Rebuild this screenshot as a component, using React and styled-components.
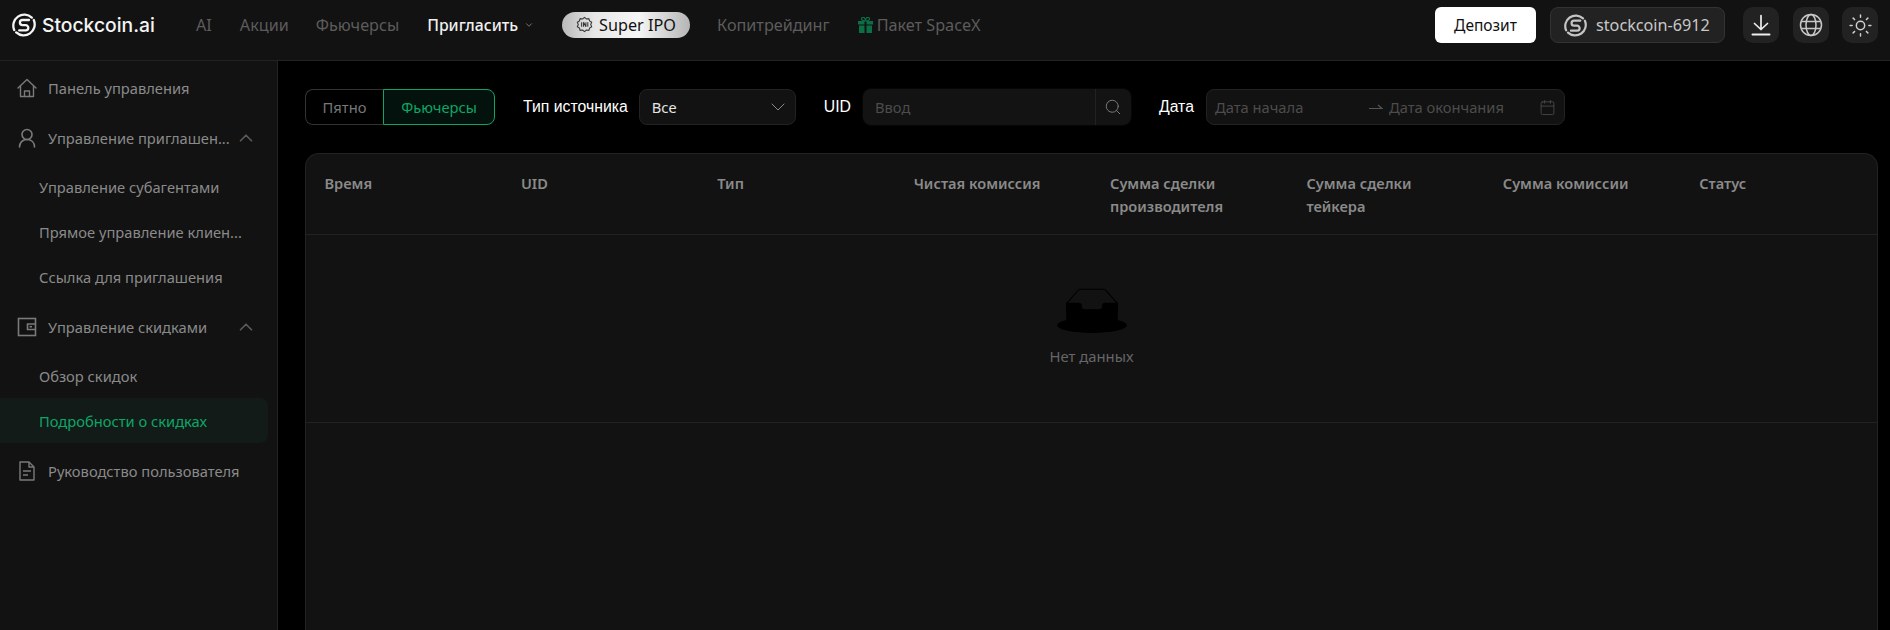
import React from 'react';
import styled, { createGlobalStyle } from 'styled-components';
import { ChevronDown, ChevronUp, Search, Sun, Calendar } from 'lucide-react';

const GlobalStyle = createGlobalStyle`
  html, body {
    margin: 0;
    height: 100%;
    background: #000;
    overflow: hidden;
  }
  #root { height: 100%; }
  * { box-sizing: border-box; }
`;

const FONT = `"Noto Sans", "Open Sans", sans-serif`;

const Page = styled.div`
  width: 1890px;
  height: 630px;
  display: flex;
  flex-direction: column;
  font-family: ${FONT};
  overflow: hidden;
`;

// Header
const Header = styled.header`
  height: 61px;
  flex: none;
  display: flex;
  align-items: flex-start;
  padding: 7px 12px 0 12px;
  background: #121212;
  border-bottom: 1px solid #222;
`;

const Brand = styled.div`
  display: flex;
  align-items: center;
  gap: 6px;
  width: 184px;
  height: 36px;
  color: #f4f4f4;
  font-family: "Inter", sans-serif;
  font-size: 19.3px;
  font-weight: 500;
`;

const Nav = styled.nav`
  display: flex;
  align-items: center;
  height: 36px;
  flex: 1;
`;

const NavItem = styled.a`
  display: flex;
  align-items: center;
  gap: ${p => p.$gap || 0}px;
  margin-right: ${p => p.$mr}px;
  font-size: ${p => (p.$active ? 15.8 : 16.2)}px;
  line-height: 34px;
  height: 34px;
  color: ${p => (p.$active ? '#f0f0f0' : '#5c5c5c')};
  font-weight: ${p => (p.$active ? 500 : 400)};
`;

const IpoPill = styled.div`
  display: flex;
  align-items: center;
  gap: 6px;
  width: 128px;
  height: 26px;
  margin-right: 27px;
  margin-top: -1px;
  padding-left: 14px;
  border-radius: 13px;
  font-size: 16.2px;
  color: #111;
  background: linear-gradient(90deg, #b9b9b9 0%, #e6e6e6 25%, #f6f6f6 60%, #b5b5b5 100%);
`;

const HeaderRight = styled.div`
  display: flex;
  align-items: center;
  height: 36px;
`;

const DepositButton = styled.button`
  width: 101px;
  height: 36px;
  margin-right: 14px;
  border: none;
  border-radius: 6px;
  background: #fff;
  color: #111;
  font-family: ${FONT};
  font-size: 15.5px;
  padding: 0;
`;

const Account = styled.div`
  display: flex;
  align-items: center;
  gap: 9px;
  width: 175px;
  height: 36px;
  margin-right: 18px;
  padding-left: 13px;
  background: #222;
  border: 1px solid #333;
  border-radius: 8px;
  color: #c8c8c8;
  font-size: 16.2px;
`;

const IconButton = styled.div`
  width: 36px;
  height: 36px;
  margin-left: ${p => p.$ml || 0}px;
  display: flex;
  align-items: center;
  justify-content: center;
  background: #222;
  border-radius: 10px;
  color: #d0d0d0;
`;

// Body
const Body = styled.div`
  flex: 1;
  display: flex;
  min-height: 0;
`;

const Sidebar = styled.aside`
  width: 278px;
  flex: none;
  padding: 4px 9px 0 0;
  background: #121212;
  border-right: 1px solid #222;
`;

const MenuItem = styled.div`
  display: flex;
  align-items: center;
  height: 45px;
  margin-bottom: ${p => p.$mb ?? 5}px;
  padding-left: ${p => (p.$sub ? 39 : 17)}px;
  border-radius: 0 8px 8px 0;
  font-size: 14.7px;
  color: ${p => (p.$selected ? '#0da667' : '#8a8a8a')};
  background: ${p => (p.$selected ? '#121b18' : 'transparent')};
`;

const MenuIcon = styled.span`
  width: 31px;
  flex: none;
  display: flex;
  color: #7a7a7a;
`;

const MenuLabel = styled.span`
  flex: 1;
  white-space: nowrap;
`;

const MenuArrow = styled.span`
  width: 33px;
  flex: none;
  display: flex;
  color: #5a5a5a;
`;

const Main = styled.main`
  flex: 1;
  min-width: 0;
  padding: 28px 12px 0 27px;
  background: #000;
  display: flex;
  flex-direction: column;
`;

const Filters = styled.div`
  display: flex;
  align-items: center;
  height: 36px;
  margin-bottom: 28px;
`;

const Toggle = styled.div`
  display: flex;
  width: 190px;
  height: 36px;
  margin-right: 28px;
`;

const ToggleOption = styled.div`
  display: flex;
  align-items: center;
  justify-content: center;
  flex: ${p => (p.$on ? '0 0 112px' : '1')};
  font-size: 14.7px;
  color: ${p => (p.$on ? '#0da667' : '#777')};
  background: ${p => (p.$on ? '#03120c' : 'transparent')};
  border: 1px solid ${p => (p.$on ? '#0da667' : '#333')};
  border-right-width: ${p => (p.$on ? 1 : 0)}px;
  border-radius: ${p => (p.$on ? '0 8px 8px 0' : '8px 0 0 8px')};
`;

const FilterLabel = styled.label`
  margin-right: ${p => p.$mr}px;
  font-family: "Liberation Sans", Arial, sans-serif;
  font-size: 15.8px;
  color: #fff;
`;

const Select = styled.div`
  display: flex;
  align-items: center;
  justify-content: space-between;
  width: 157px;
  height: 36px;
  margin-right: 28px;
  padding: 0 5px 0 12px;
  background: #121212;
  border: 1px solid #222;
  border-radius: 8px;
  font-size: 14.7px;
  color: #e4e4e4;
`;

const SearchGroup = styled.div`
  display: flex;
  width: 270px;
  height: 38px;
  margin-right: 27px;
  border: 1px solid #060606;
  border-radius: 9px;
  background: #131313;
`;

const SearchText = styled.div`
  flex: 1;
  display: flex;
  align-items: center;
  padding-left: 12px;
  font-size: 14.7px;
  color: #4c4c4c;
`;

const SearchAddon = styled.div`
  width: 36px;
  display: flex;
  align-items: center;
  justify-content: center;
  border-left: 1px solid #222;
  color: #7a7a7a;
`;

const DatePicker = styled.div`
  display: flex;
  align-items: center;
  width: 359px;
  height: 36px;
  padding: 0 8px;
  background: #121212;
  border: 1px solid #222;
  border-radius: 8px;
  font-size: 14.7px;
  color: #4c4c4c;
`;

const DateStart = styled.span`
  width: 154px;
`;

const DateArrow = styled.span`
  width: 20px;
  display: flex;
`;

const DateEnd = styled.span`
  flex: 1;
`;

const Panel = styled.section`
  flex: 1;
  background: #121212;
  border: 1px solid #222;
  border-bottom: none;
  border-radius: 14px 14px 0 0;
`;

const TableHead = styled.div`
  display: grid;
  grid-template-columns: repeat(8, 1fr);
  height: 81px;
  padding-top: 18px;
  border-bottom: 1px solid #222;
`;

const HeadCell = styled.div`
  padding: 0 18px 0 18.5px;
  font-size: 14.6px;
  font-weight: 600;
  line-height: 23px;
  color: #8a8a8a;
`;

const EmptyRow = styled.div`
  height: 188px;
  display: flex;
  flex-direction: column;
  align-items: center;
  padding-top: 53px;
  border-bottom: 1px solid #222;
`;

const EmptyText = styled.div`
  margin-top: 12px;
  font-size: 14.8px;
  line-height: 22px;
  color: #666;
`;

const StockLogo = ({ size = 24, color = '#f4f4f4' }) => (
  <svg width={size} height={size} viewBox="0 0 24 24" fill="none" stroke={color} strokeWidth="2.3" strokeLinecap="round">
    <path d="M19.8 4.6A11 11 0 0 0 2.2 17" />
    <path d="M4.2 19.4A11 11 0 0 0 21.8 7" />
    <path d="M17 7H10.5a2.6 2.6 0 0 0 0 5.2h3.2a2.6 2.6 0 0 1 0 5.2H7.2" />
  </svg>
);

const IpoIcon = () => (
  <svg width="17" height="17" viewBox="0 0 18 18" fill="none" stroke="#333" strokeWidth="1.1">
    <path d="M9 1.5l2 1.6 2.6-.3.8 2.4 2.2 1.4-1 2.4 1 2.4-2.2 1.4-.8 2.4-2.6-.3-2 1.6-2-1.6-2.6.3-.8-2.4-2.2-1.4 1-2.4-1-2.4 2.2-1.4.8-2.4 2.6.3z" />
    <path d="M6 6.5v5M8 11.5v-5l2.5 5v-5M12.5 6.5v5" />
  </svg>
);

const GiftIcon = () => (
  <svg width="15" height="16" viewBox="0 0 15 16" fill="#0b6e45">
    <rect x="0" y="4" width="15" height="3.5" />
    <rect x="1" y="8.5" width="13" height="7.5" />
    <rect x="6.5" y="4" width="2" height="12" fill="#121212" />
    <path d="M7.5 4C5 4 3.5 3 3.5 1.8S5 0 6 .6 7.5 2.5 7.5 4zm0 0c2.5 0 4-1 4-2.2S10 0 9 .6 7.5 2.5 7.5 4z" fill="none" stroke="#0b6e45" strokeWidth="1.2" />
  </svg>
);

const DownloadIcon = () => (
  <svg width="24" height="24" viewBox="0 0 24 24" fill="none" stroke="#eee" strokeWidth="1.7" strokeLinecap="round" strokeLinejoin="round">
    <path d="M12 2.5V16.5M5.5 10.5L12 16.5L18.5 10.5" />
    <path d="M3.5 21.5H20.5" strokeWidth="2" />
  </svg>
);

const GlobeIcon = () => (
  <svg width="24" height="24" viewBox="0 0 24 24" fill="none" stroke="#c8c8c8" strokeWidth="1.5">
    <circle cx="12" cy="12" r="10.5" />
    <ellipse cx="12" cy="12" rx="5" ry="10.5" />
    <path d="M2.5 8.5H21.5M2.5 15.5H21.5" />
  </svg>
);

const HomeIcon = () => (
  <svg width="20" height="20" viewBox="0 0 20 20" fill="none" stroke="#7a7a7a" strokeWidth="1.4" strokeLinejoin="round" strokeLinecap="round">
    <path d="M1 10L10 1.5L19 10" />
    <path d="M3.5 8V18.5H16.5V8" />
    <path d="M7.5 18.5V13H12.5V18.5" />
  </svg>
);

const UserIcon = () => (
  <svg width="20" height="20" viewBox="0 0 20 20" fill="none" stroke="#7a7a7a" strokeWidth="1.6" strokeLinecap="round">
    <circle cx="10" cy="6.5" r="5" />
    <path d="M2.5 19C2.5 14.5 5.5 11.5 10 11.5S17.5 14.5 17.5 19" />
  </svg>
);

const WalletIcon = () => (
  <svg width="20" height="20" viewBox="0 0 20 20" fill="none" stroke="#7a7a7a" strokeWidth="1.6">
    <rect x="1.5" y="1.5" width="17" height="17" />
    <path d="M18.5 7H10.5V12.5H18.5" />
    <path d="M12.5 9.7H15" />
  </svg>
);

const DocIcon = () => (
  <svg width="20" height="20" viewBox="0 0 20 20" fill="none" stroke="#7a7a7a" strokeWidth="1.4" strokeLinejoin="round">
    <path d="M3 1H12L17 6V19H3Z" />
    <path d="M12 1V6H17" />
    <path d="M6 10H14M6 14H11" />
  </svg>
);

const HalfArrow = () => (
  <svg width="14" height="10" viewBox="0 0 14 10" fill="none" stroke="#555" strokeWidth="1.2">
    <path d="M0 6.5H13L9 3" />
  </svg>
);

const EmptyIcon = () => (
  <svg width="70" height="45" viewBox="0 0 64 41">
    <g transform="translate(0 1)" fill="none" fillRule="evenodd">
      <ellipse fill="#000" cx="32" cy="33" rx="32" ry="7" />
      <g fillRule="nonzero" stroke="#000">
        <path d="M55 12.76L44.854 1.258C44.367.474 43.656 0 42.907 0H21.093c-.749 0-1.46.474-1.947 1.257L9 12.761V22h46v-9.24z" />
        <path d="M41.613 15.931c0-1.605.994-2.93 2.227-2.931H55v18.137C55 33.26 53.68 35 52.05 35h-40.1C10.32 35 9 33.259 9 31.137V13h11.16c1.233 0 2.227 1.323 2.227 2.928v.022c0 1.605 1.005 2.901 2.237 2.901h14.752c1.232 0 2.237-1.308 2.237-2.913v-.007z" fill="#000" />
      </g>
    </g>
  </svg>
);

const columns = [
  'Время', 'UID', 'Тип', 'Чистая комиссия', 'Сумма сделки производителя',
  'Сумма сделки тейкера', 'Сумма комиссии', 'Статус',
];

export default function App() {
  return (
    <Page>
      <GlobalStyle />
      <Header>
        <Brand>
          <StockLogo />
          Stockcoin.ai
        </Brand>
        <Nav>
          <NavItem $mr={28}>AI</NavItem>
          <NavItem $mr={27}>Акции</NavItem>
          <NavItem $mr={28}>Фьючерсы</NavItem>
          <NavItem $active $gap={6} $mr={28}>Пригласить <ChevronDown size={10} color="#888" /></NavItem>
          <IpoPill><IpoIcon />Super IPO</IpoPill>
          <NavItem $mr={28}>Копитрейдинг</NavItem>
          <NavItem $gap={4} $mr={0}><GiftIcon />Пакет SpaceX</NavItem>
        </Nav>
        <HeaderRight>
          <DepositButton>Депозит</DepositButton>
          <Account>
            <StockLogo size={23} color="#c4c4c4" />
            stockcoin-6912
          </Account>
          <IconButton><DownloadIcon /></IconButton>
          <IconButton $ml={14}><GlobeIcon /></IconButton>
          <IconButton $ml={13}><Sun size={25} strokeWidth={1.4} /></IconButton>
        </HeaderRight>
      </Header>
      <Body>
        <Sidebar>
          <MenuItem>
            <MenuIcon><HomeIcon /></MenuIcon>
            <MenuLabel>Панель управления</MenuLabel>
          </MenuItem>
          <MenuItem $mb={4}>
            <MenuIcon><UserIcon /></MenuIcon>
            <MenuLabel>Управление приглашен...</MenuLabel>
            <MenuArrow><ChevronUp size={22} strokeWidth={1.9} /></MenuArrow>
          </MenuItem>
          <MenuItem $sub $mb={0}><MenuLabel>Управление субагентами</MenuLabel></MenuItem>
          <MenuItem $sub $mb={0}><MenuLabel>Прямое управление клиен...</MenuLabel></MenuItem>
          <MenuItem $sub><MenuLabel>Ссылка для приглашения</MenuLabel></MenuItem>
          <MenuItem $mb={4}>
            <MenuIcon><WalletIcon /></MenuIcon>
            <MenuLabel>Управление скидками</MenuLabel>
            <MenuArrow><ChevronUp size={22} strokeWidth={1.9} /></MenuArrow>
          </MenuItem>
          <MenuItem $sub $mb={0}><MenuLabel>Обзор скидок</MenuLabel></MenuItem>
          <MenuItem $sub $selected><MenuLabel>Подробности о скидках</MenuLabel></MenuItem>
          <MenuItem>
            <MenuIcon><DocIcon /></MenuIcon>
            <MenuLabel>Руководство пользователя</MenuLabel>
          </MenuItem>
        </Sidebar>
        <Main>
          <Filters>
            <Toggle>
              <ToggleOption>Пятно</ToggleOption>
              <ToggleOption $on>Фьючерсы</ToggleOption>
            </Toggle>
            <FilterLabel $mr={11}>Тип источника</FilterLabel>
            <Select>Все <ChevronDown size={24} strokeWidth={1} color="#888" /></Select>
            <FilterLabel $mr={11}>UID</FilterLabel>
            <SearchGroup>
              <SearchText>Ввод</SearchText>
              <SearchAddon><Search size={18} strokeWidth={1.3} /></SearchAddon>
            </SearchGroup>
            <FilterLabel $mr={12}>Дата</FilterLabel>
            <DatePicker>
              <DateStart>Дата начала</DateStart>
              <DateArrow><HalfArrow /></DateArrow>
              <DateEnd>Дата окончания</DateEnd>
              <Calendar size={17} strokeWidth={1.2} color="#4c4c4c" />
            </DatePicker>
          </Filters>
          <Panel>
            <TableHead>
              {columns.map(c => <HeadCell key={c}>{c}</HeadCell>)}
            </TableHead>
            <EmptyRow>
              <EmptyIcon />
              <EmptyText>Нет данных</EmptyText>
            </EmptyRow>
          </Panel>
        </Main>
      </Body>
    </Page>
  );
}
